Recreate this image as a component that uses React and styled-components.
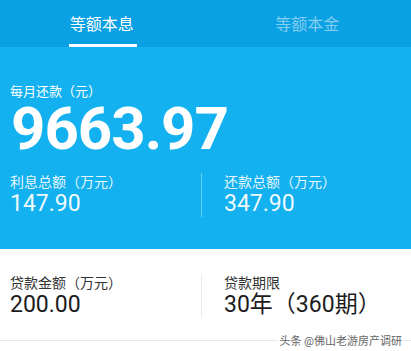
import React from 'react';
import styled, { createGlobalStyle } from 'styled-components';

const GlobalStyle = createGlobalStyle`
  body {
    margin: 0;
    background: #fff;
    font-family: Roboto, "Noto Sans CJK SC", sans-serif;
  }
`;

const tabs = ['等额本息', '等额本金'];

const stats = [
  { label: '利息总额（万元）', value: '147.90' },
  { label: '还款总额（万元）', value: '347.90' },
];

const details = [
  { label: '贷款金额（万元）', value: '200.00' },
  { label: '贷款期限', value: '30年（360期）' },
];

const App = () => {
  return <Page>
    <GlobalStyle />
    <TabBar>
      {tabs.map((tab, i) => (
        <Tab key={tab}>
          <TabLabel active={i === 0}>{tab}</TabLabel>
        </Tab>
      ))}
    </TabBar>

    <Summary>
      <SummaryLabel>每月还款（元）</SummaryLabel>
      <BigNumber>9663.97</BigNumber>
      <Grid>
        {stats.map((s, i) => (
          <Cell key={s.label} divided={i > 0} light>
            <CellLabel light>{s.label}</CellLabel>
            <CellValue light>{s.value}</CellValue>
          </Cell>
        ))}
      </Grid>
    </Summary>

    <Details>
      <Grid>
        {details.map((d, i) => (
          <Cell key={d.label} divided={i > 0}>
            <CellLabel>{d.label}</CellLabel>
            <CellValue>{d.value}</CellValue>
          </Cell>
        ))}
      </Grid>
    </Details>

    <Footer>
      <Rule />
      <Watermark>头条 @佛山老游房产调研</Watermark>
      <Rule short />
    </Footer>
  </Page>;
};

const Page = styled.div`
  width: 411px;
  height: 351px;
  overflow: hidden;
  background: #fff;
`;

const TabBar = styled.div`
  display: flex;
  height: 47px;
  background: #09a0e4;
`;

const Tab = styled.div`
  flex: 1;
  display: flex;
  justify-content: center;
`;

const TabLabel = styled.div`
  box-sizing: border-box;
  height: 100%;
  display: flex;
  align-items: center;
  padding: 1px 3px 0 1px;
  font-size: 16px;
  color: ${props => props.active ? '#fff' : 'rgba(255,255,255,0.5)'};
  border-bottom: 3px solid ${props => props.active ? '#fff' : 'transparent'};
`;

const Summary = styled.div`
  box-sizing: border-box;
  height: 202px;
  padding: 37px 0 0 10px;
  background: #13b1ef;
  color: #fff;
`;

const SummaryLabel = styled.div`
  font-size: 13px;
  line-height: 16px;
`;

const BigNumber = styled.div`
  font-size: 60px;
  font-weight: 700;
  line-height: 56px;
  letter-spacing: -1px;
  margin: 1px 0 0 1px;
`;

const Grid = styled.div`
  display: grid;
  grid-template-columns: 191px 1fr;
  margin-top: 16px;
`;

const Details = styled.div`
  padding: 9px 0 0 10px;
`;

const Cell = styled.div`
  height: 44px;
  padding-left: ${props => props.divided ? '22px' : '0'};
  border-left: ${props => props.divided
    ? (props.light ? '1px solid rgba(255,255,255,0.35)' : '1px solid #ececec')
    : 'none'};
`;

const CellLabel = styled.div`
  font-size: 14px;
  line-height: 18px;
  color: ${props => props.light ? 'rgba(255,255,255,0.92)' : '#333'};
`;

const CellValue = styled.div`
  font-size: 23px;
  line-height: 26px;
  color: ${props => props.light ? 'rgba(255,255,255,0.95)' : '#1c1c1c'};
`;

const Footer = styled.div`
  display: flex;
  align-items: center;
  height: 14px;
  margin-top: 15px;
`;

const Rule = styled.div`
  flex: ${props => props.short ? '0 0 8px' : '1'};
  height: 1px;
  background: #e8e8e8;
`;

const Watermark = styled.div`
  padding: 0 1px;
  font-size: 11px;
  color: #666;
  white-space: nowrap;
`;

export default App;
